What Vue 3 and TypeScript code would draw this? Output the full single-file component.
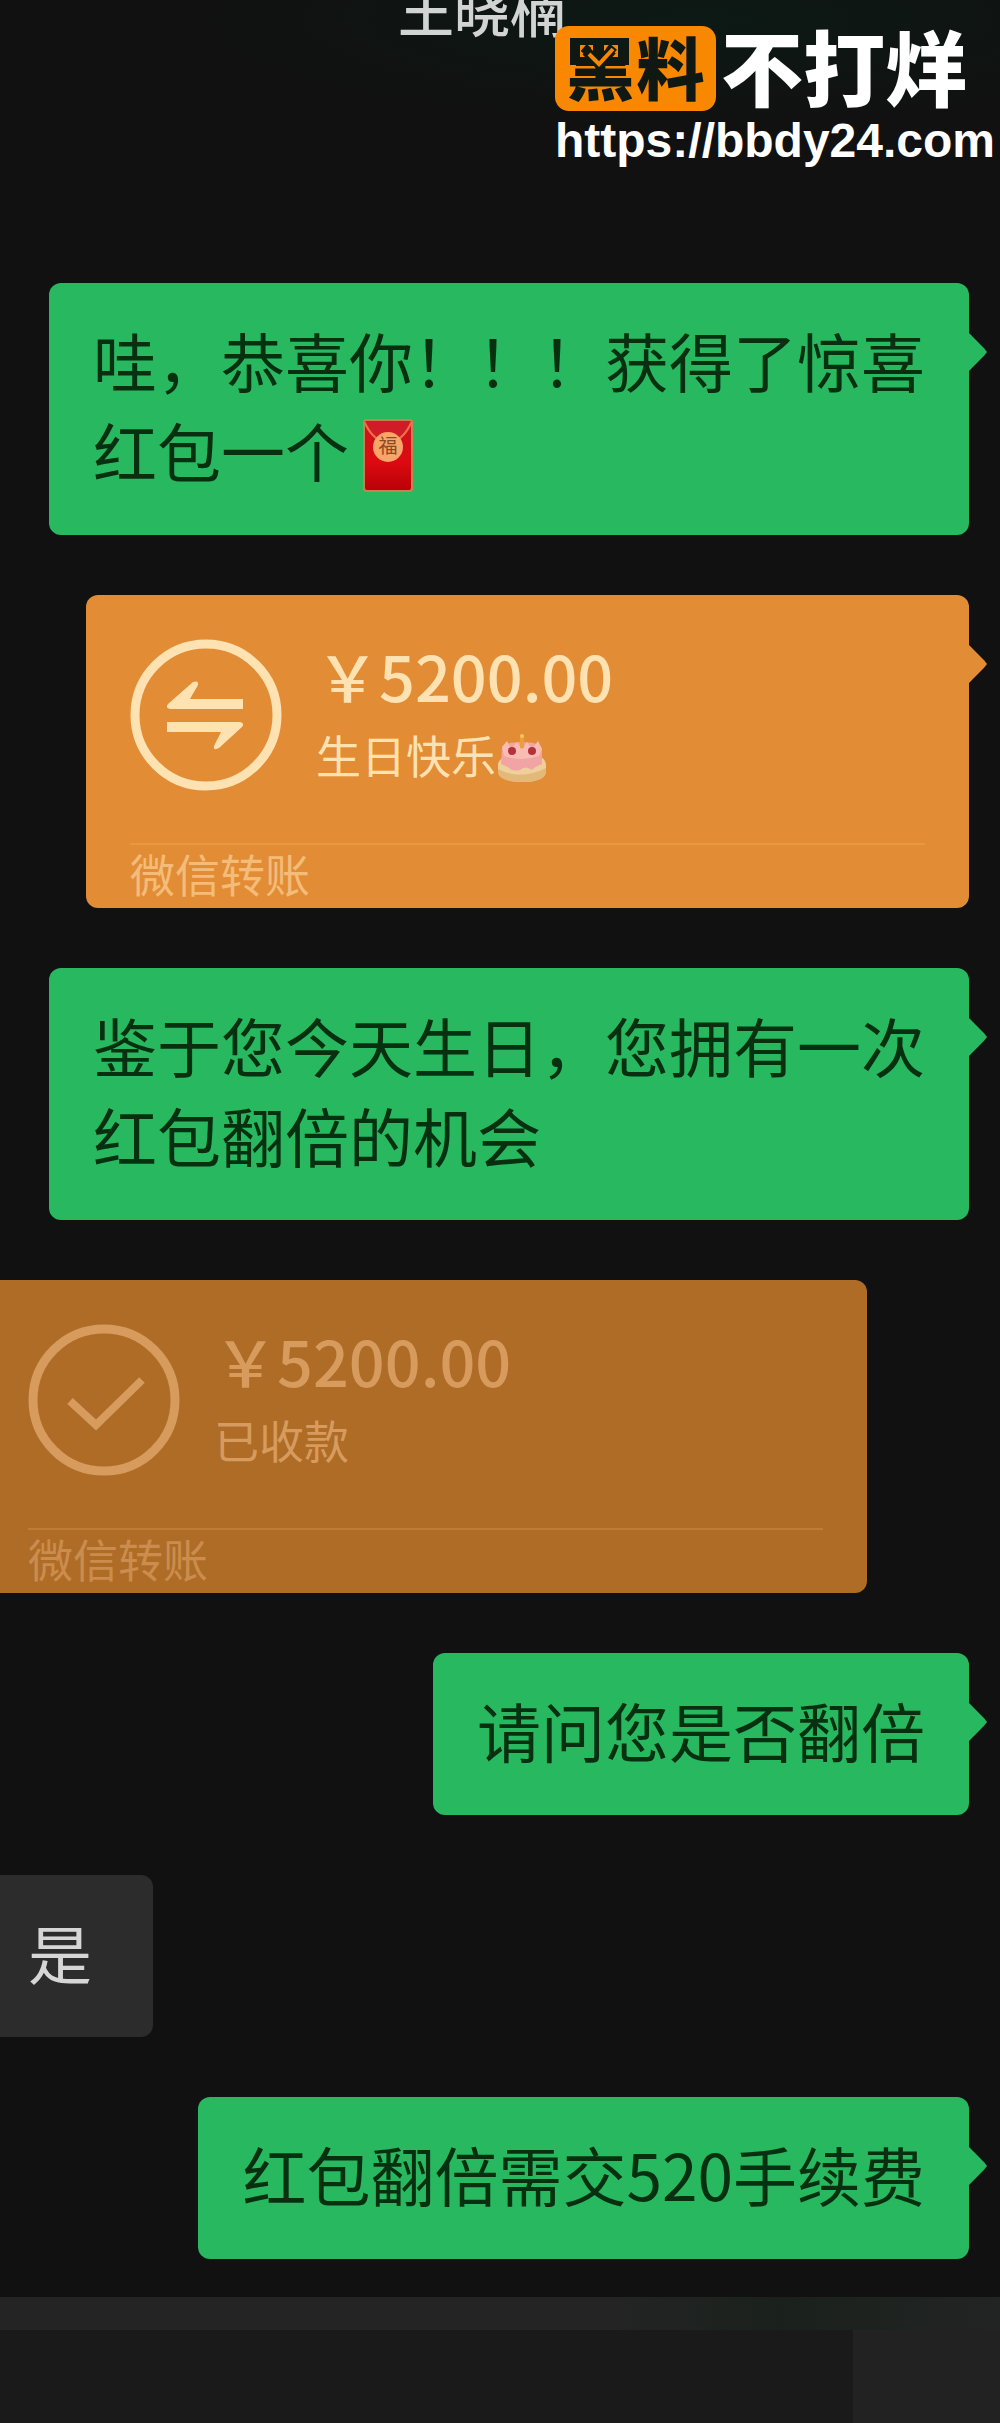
<script setup lang="ts">
interface TextMessage {
  id: number
  kind: 'text'
  side: 'me' | 'peer'
  lines: string[]
  packet?: boolean
}

interface TransferMessage {
  id: number
  kind: 'transfer'
  side: 'me' | 'peer'
  amount: string
  note: string
  cake?: boolean
}

type Message = TextMessage | TransferMessage

const contact = '王晓楠'

const messages: Message[] = [
  { id: 1, kind: 'text', side: 'me', lines: ['哇，恭喜你！！！获得了惊喜', '红包一个'], packet: true },
  { id: 2, kind: 'transfer', side: 'me', amount: '5200.00', note: '生日快乐', cake: true },
  { id: 3, kind: 'text', side: 'me', lines: ['鉴于您今天生日，您拥有一次', '红包翻倍的机会'] },
  { id: 4, kind: 'transfer', side: 'peer', amount: '5200.00', note: '已收款' },
  { id: 5, kind: 'text', side: 'me', lines: ['请问您是否翻倍'] },
  { id: 6, kind: 'text', side: 'peer', lines: ['是'] },
  { id: 7, kind: 'text', side: 'me', lines: ['红包翻倍需交520手续费'] },
]
</script>

<template>
  <div class="page">
    <header class="header">
      <h1 class="title">{{ contact }}</h1>
    </header>

    <aside class="brand">
      <div class="brand-row">
        <span class="badge">
          <span>黑</span>
          <span>料</span>
          <svg class="badge-mark" viewBox="0 0 161 85" aria-hidden="true">
            <rect x="15" y="12" width="59" height="27" fill="#0f1813" />
            <path d="M25 19H38V31H25ZM49 19H63V31H49Z" fill="#f88800" />
            <path d="M31 25 44 38 57 24" fill="none" stroke="#0f1813" stroke-width="10" />
            <path d="M28 27 34 20M53 20 60 26" stroke="#0f1813" stroke-width="6" />
            <path d="M34 28 44 38 58 23" fill="none" stroke="#f88800" stroke-width="4" />
          </svg>
        </span>
        <span class="slogan">不打烊</span>
      </div>
      <a class="site" href="https://bbdy24.com">https://bbdy24.com</a>
    </aside>

    <main class="chat">
      <template v-for="m in messages" :key="m.id">
        <div v-if="m.kind === 'text'" class="bubble" :class="m.side">
          <p v-for="(line, i) in m.lines" :key="i" class="line">
            {{ line
            }}<svg v-if="m.packet && i === m.lines.length - 1" class="packet" viewBox="0 0 52 76" role="img" aria-label="红包">
              <defs>
                <linearGradient id="packetFill" x1="0" y1="0" x2="0" y2="1">
                  <stop offset="0" stop-color="#c9161f" />
                  <stop offset="0.6" stop-color="#dc0a10" />
                  <stop offset="1" stop-color="#b80208" />
                </linearGradient>
              </defs>
              <rect x="1" y="1" width="50" height="73" rx="3" fill="#c98050" />
              <rect x="3" y="3" width="46" height="69" rx="2" fill="url(#packetFill)" />
              <path d="M2 3C8 17 16 24 26 24S44 17 50 3" fill="#d01c26" stroke="#ee7048" stroke-width="2" />
              <circle cx="26" cy="29" r="15" fill="#f9a468" />
              <text x="26" y="35" text-anchor="middle" class="packet-text">福</text>
            </svg>
          </p>
        </div>

        <section v-else class="card" :class="m.side">
          <div class="card-body">
            <svg class="card-icon" viewBox="0 0 152 152" aria-hidden="true">
              <circle cx="76" cy="76" r="71" fill="none" stroke="currentColor" stroke-width="9" />
              <path
                v-if="m.side === 'me'"
                d="M113 60V70H40Q35 69 38 65L63 43Q69 41 68 46L60 60ZM37 83H110Q115 84 112 88L89 109Q83 112 84 107L91 93H37Z"
                fill="currentColor"
              />
              <path v-else d="M42 77 68 101 114 56" fill="none" stroke="currentColor" stroke-width="8" />
            </svg>
            <div class="card-info">
              <p class="amount">￥{{ m.amount }}</p>
              <p class="note">
                {{ m.note
                }}<svg v-if="m.cake" class="cake" viewBox="0 0 52 52" role="img" aria-label="蛋糕">
                  <path d="M2 32Q4 25 12 24H42Q50 26 50 34V40Q48 50 26 50T2 39Z" fill="#efcf9b" />
                  <path d="M2 37Q24 49 50 36V41Q48 50 26 50T2 41Z" fill="#e3b878" />
                  <path d="M6 16Q8 10 26 10T46 17V32Q40 34 36 38 29 33 24 38 16 40 12 35L5 32Z" fill="#f2a3a4" />
                  <path d="M6 15 11 9 15 17 21 10 26 18 31 10 36 17 42 9 46 17 43 24Q25 30 8 24Z" fill="#f9bcb2" />
                  <circle cx="16" cy="19" r="4" fill="#b3323c" />
                  <circle cx="36" cy="19" r="4" fill="#b3323c" />
                  <path d="M26 5V16" stroke="#e8a03c" stroke-width="4" />
                  <circle cx="26" cy="4" r="2" fill="#f6c65a" />
                </svg>
              </p>
            </div>
          </div>
          <footer class="card-foot">微信转账</footer>
        </section>
      </template>
    </main>

    <footer class="toolbar">
      <div class="toolbar-edge"></div>
      <div class="toolbar-body">
        <div class="toolbar-field"></div>
        <div class="toolbar-side"></div>
      </div>
    </footer>
  </div>
</template>

<style>
body {
  margin: 0;
  background: #111111;
}
</style>

<style scoped>
.page {
  position: relative;
  display: flex;
  flex-direction: column;
  min-height: 100vh;
  overflow: hidden;
  background: #111111;
  font-family: 'Noto Sans CJK SC', sans-serif;
}

p,
h1 {
  margin: 0;
  font-weight: 400;
}

.header {
  height: 283px;
  overflow: hidden;
  background: radial-gradient(ellipse 500px 100px at 70% 20px, #0c1914, #111111);
}

.title {
  margin-top: -26px;
  padding-right: 36px;
  font-size: 56px;
  font-weight: 500;
  line-height: 68px;
  text-align: center;
  color: #d2d4d3;
}

.brand {
  position: absolute;
  top: 26px;
  right: 5px;
  width: 440px;
}

.brand-row {
  display: flex;
  align-items: center;
  gap: 5px;
}

.badge {
  position: relative;
  display: flex;
  align-items: center;
  justify-content: center;
  gap: 2px;
  width: 161px;
  height: 85px;
  border-radius: 14px;
  background: #f88800;
  color: #0f1813;
  font-size: 68px;
  font-weight: 900;
  line-height: 80px;
}

.badge > span {
  height: 85px;
}

.badge-mark {
  position: absolute;
  inset: 0;
  width: 161px;
  height: 85px;
}

.slogan {
  height: 85px;
  color: #ffffff;
  font-size: 82px;
  font-weight: 900;
  line-height: 78px;
  white-space: nowrap;
}

.site {
  display: block;
  margin-top: 2px;
  font-family: 'Liberation Sans', Arial, sans-serif;
  font-size: 48px;
  font-weight: 700;
  line-height: 56px;
  color: #ffffff;
  text-decoration: none;
}

.chat {
  display: flex;
  flex-direction: column;
  gap: 60px;
  padding: 0 31px 38px 0;
}

.bubble,
.card {
  position: relative;
  box-sizing: border-box;
  border-radius: 12px;
}

.me {
  align-self: flex-end;
}

.peer {
  align-self: flex-start;
  margin-left: -16px;
}

.me::after {
  content: '';
  position: absolute;
  top: 50px;
  left: 100%;
  width: 18px;
  height: 38px;
  background: inherit;
  clip-path: polygon(0 0, 84% 40%, 100% 50%, 84% 60%, 0 100%);
}

.bubble {
  padding: 31px 44px 41px;
  font-size: 64px;
  line-height: 90px;
}

.bubble.me {
  background: #27b860;
  color: #06300f;
}

.bubble.peer {
  min-width: 169px;
  background: #2c2c2c;
  color: #d6d6d6;
}

.line {
  height: 90px;
  white-space: nowrap;
}

.packet {
  width: 52px;
  height: 76px;
  margin-left: 13px;
  vertical-align: -17px;
}

.packet-text {
  font-size: 19px;
  fill: #8a4a20;
}

.card {
  width: 883px;
  max-width: 100%;
  padding: 44px 44px 5px;
}

.card.me {
  background: #e28c36;
  color: #ffe2b2;
}

.card.peer {
  background: #ae6c27;
  color: #d69b5d;
}

.card-body {
  display: flex;
  gap: 34px;
  padding-bottom: 52px;
}

.card-icon {
  flex: none;
  width: 152px;
  height: 152px;
}

.amount {
  font-size: 63px;
  font-weight: 500;
  line-height: 72px;
}

.note {
  height: 80px;
  font-size: 45px;
  line-height: 88px;
}

.cake {
  width: 52px;
  height: 52px;
  vertical-align: -10px;
}

.card-foot {
  border-top: 2px solid #e9983f;
  font-size: 45px;
  line-height: 58px;
  color: #f3bc79;
}

.card.peer .card-foot {
  border-color: #bf7b39;
  color: #cb8d4d;
}

.toolbar {
  display: flex;
  flex: 1;
  flex-direction: column;
  min-height: 120px;
  background: #1a1a1a;
}

.toolbar-edge {
  height: 33px;
  background: linear-gradient(90deg, #242424 60%, #1a211d 78%, #222423);
}

.toolbar-body {
  display: flex;
  flex: 1;
}

.toolbar-field {
  flex: 1;
}

.toolbar-side {
  width: 147px;
  background: #222222;
}
</style>
